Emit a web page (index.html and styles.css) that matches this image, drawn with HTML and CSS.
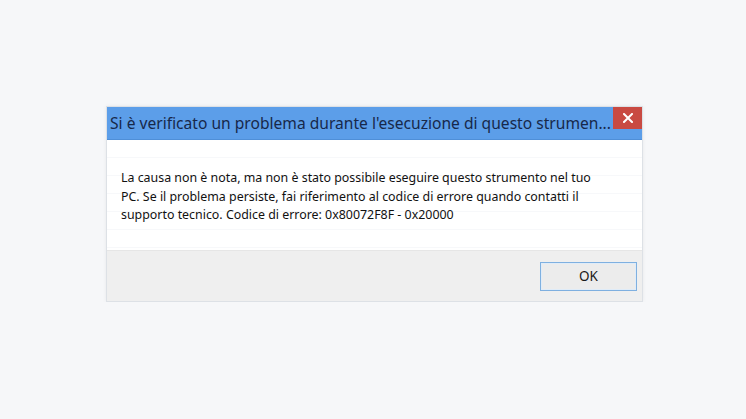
FILE: index.html
```html
<!DOCTYPE html>
<html>

<head>
    <title>Errore</title>
    <link rel="stylesheet" href="styles.css">
</head>

<body>
    <div class="dialog">
        <div class="titlebar">
            <span class="title">Si è verificato un problema durante l'esecuzione di questo strumen...</span>
            <div class="close-btn">
                <svg width="10" height="10" viewBox="0 0 10 10">
                    <path d="M1 1 L9 9 M9 1 L1 9" stroke="#fff" stroke-width="2" stroke-linecap="square" />
                </svg>
            </div>
        </div>
        <div class="content">
            <p class="message">La causa non è nota, ma non è stato possibile eseguire questo strumento nel tuo PC. Se il problema persiste, fai riferimento al codice di errore quando contatti il supporto tecnico. Codice di errore: 0x80072F8F - 0x20000</p>
        </div>
        <div class="footer">
            <button class="ok-btn">OK</button>
        </div>
    </div>
</body>

</html>
```

FILE: styles.css
```css
* {
    margin: 0;
    padding: 0;
    box-sizing: border-box;
}

body {
    background-color: #f6f7f9;
    font-family: "Noto Sans", "Open Sans", sans-serif;
    padding: 106px 0 0 106px;
}

.dialog {
    width: 537px;
    border: 1px solid #dde1e6;
    background-color: #fff;
    box-shadow: 0 0 4px rgba(0, 0, 0, 0.06);
}

.titlebar {
    height: 33px;
    background-color: #5c9ee9;
    display: flex;
    flex-direction: row;
    justify-content: space-between;
    align-items: flex-start;
    border-bottom: 1px solid #4f8fd8;
}

.title {
    font-size: 15.6px;
    line-height: 33px;
    color: #17284a;
    padding-left: 3px;
    white-space: nowrap;
}

.close-btn {
    width: 29px;
    height: 22px;
    background-color: #c94a42;
    display: flex;
    align-items: center;
    justify-content: center;
}

.content {
    height: 110px;
    padding: 29px 14px 0 14px;
    background: repeating-linear-gradient(#fff 0, #fff 17px, #f7f8fa 17px, #f7f8fa 18px);
}

.message {
    width: 482px;
    font-size: 12.4px;
    line-height: 18.5px;
    color: #111;
}

.footer {
    height: 51px;
    background-color: #efefef;
    display: flex;
    justify-content: flex-end;
    align-items: center;
    padding-right: 5px;
    border-top: 1px solid #e6e6e6;
}

.ok-btn {
    width: 97px;
    height: 29px;
    border: 1px solid #7fb0e0;
    background-color: #ececec;
    font: 13.5px "Noto Sans", sans-serif;
    color: #1a1a1a;
    box-shadow: inset 0 0 0 1px #e0ecf8;
}
```
